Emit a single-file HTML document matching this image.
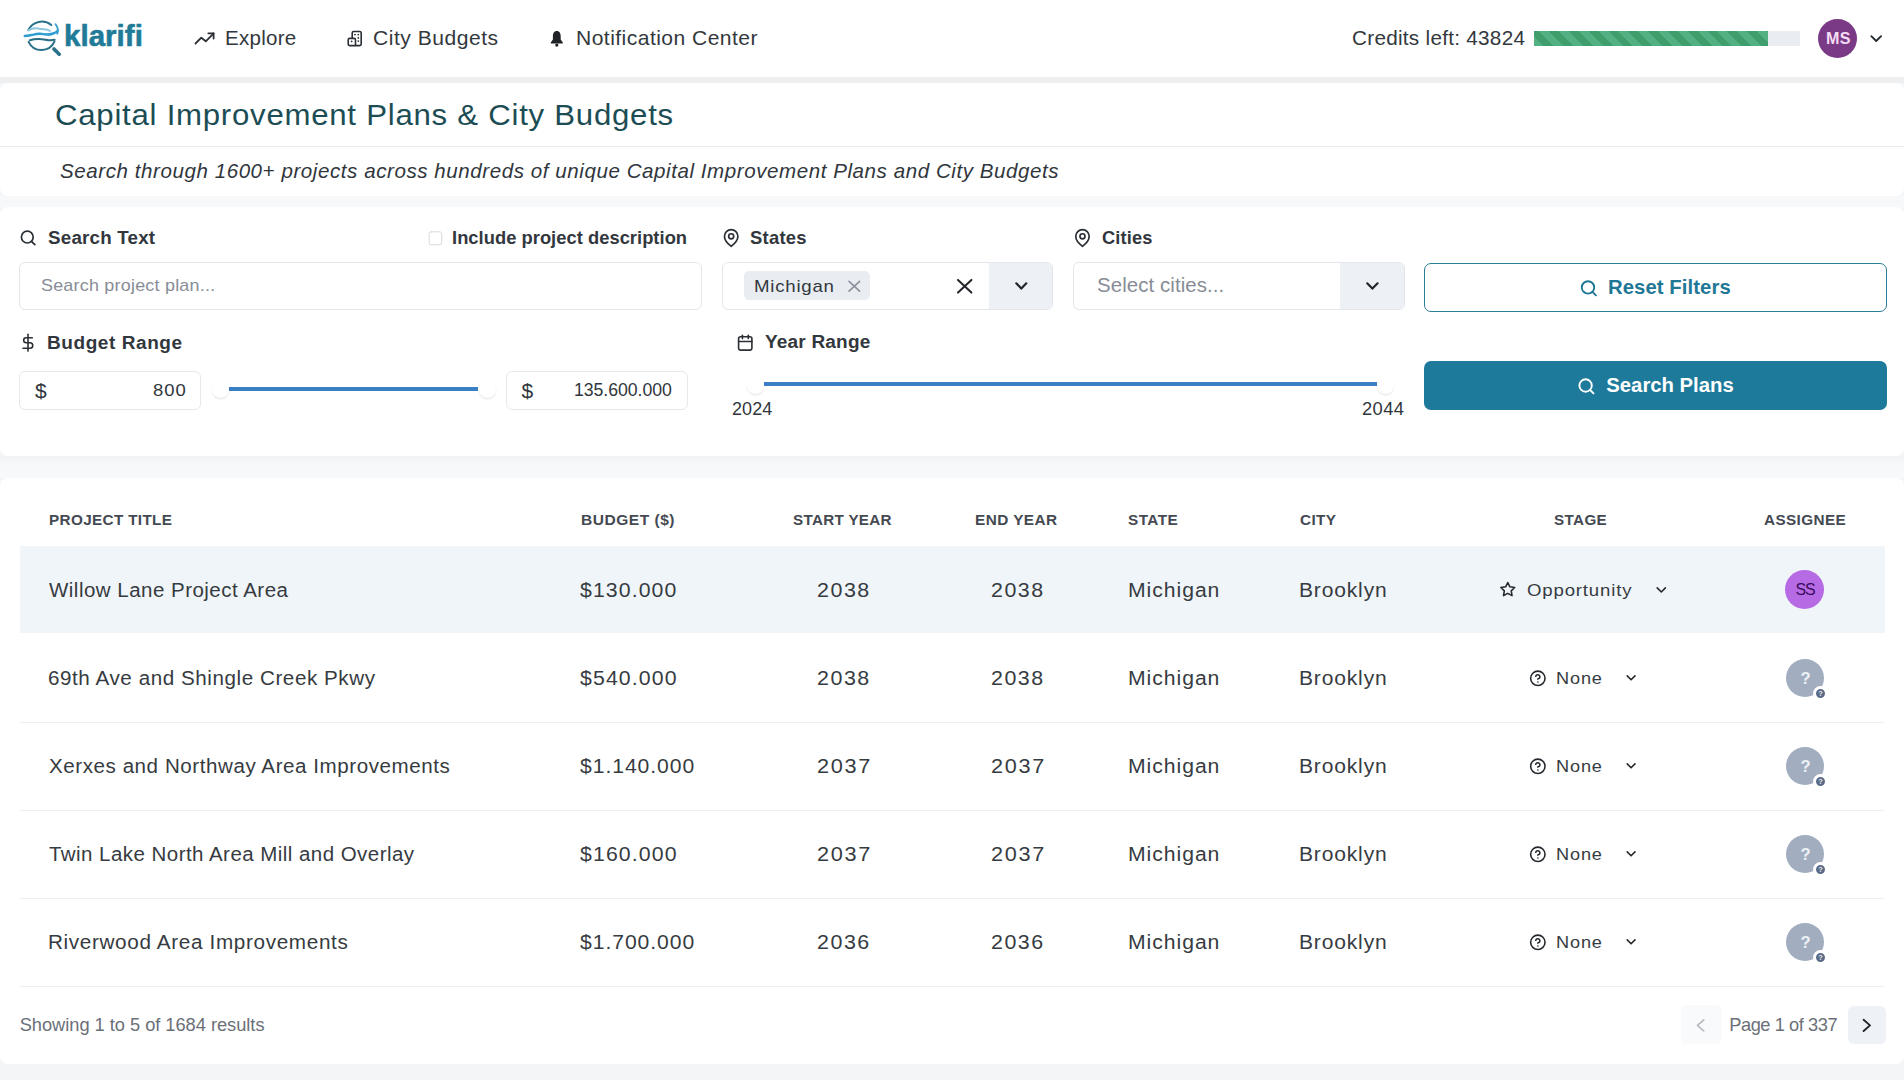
<!DOCTYPE html>
<html><head><meta charset="utf-8">
<style>
html,body{margin:0;padding:0}
body{width:1904px;height:1080px;overflow:hidden;position:relative;background:#f4f5f7;font-family:"Liberation Sans",sans-serif}
.b{position:absolute;box-sizing:border-box}
.t{position:absolute;white-space:nowrap;font-family:"Liberation Sans",sans-serif}
svg.ov{position:absolute;left:0;top:0;width:1904px;height:1080px;overflow:visible}
</style></head><body>
<!-- backgrounds -->
<div class="b" style="left:0;top:0;width:1904px;height:77px;background:#ffffff"></div>
<div class="b" style="left:0;top:77px;width:1904px;height:6px;background:#edeff1"></div>
<div class="b" style="left:0;top:83px;width:1904px;height:113px;background:#ffffff;border-radius:8px"></div>
<div class="b" style="left:0;top:146px;width:1904px;height:1px;background:#e8eaed"></div>
<div class="b" style="left:0;top:196px;width:1904px;height:12px;background:#f7f8fa"></div>
<div class="b" style="left:0;top:207px;width:1904px;height:249px;background:#ffffff;border-radius:8px"></div>
<div class="b" style="left:0;top:456px;width:1904px;height:22px;background:linear-gradient(#f1f3f4,#f7f8fa 40%,#f8f9fb)"></div>
<div class="b" style="left:0;top:478px;width:1904px;height:586px;background:#ffffff;border-radius:8px"></div>

<!-- header progress + avatar -->
<div class="b" style="left:1534px;top:31px;width:266px;height:15px;background:#e9edf1"></div>
<div class="b" style="left:1534px;top:31px;width:234px;height:15px;background:repeating-linear-gradient(45deg,#52b083 0px,#52b083 7px,#3f9e6c 7px,#3f9e6c 14px)"></div>
<div class="b" style="left:1818px;top:19px;width:39px;height:39px;border-radius:50%;background:#7a3a86"></div>

<!-- inputs -->
<div class="b" style="left:19px;top:262px;width:683px;height:48px;border:1px solid #e3e6ea;border-radius:6px;background:#fff"></div>
<div class="b" style="left:722px;top:262px;width:331px;height:48px;border:1px solid #e3e6ea;border-radius:6px;background:#fff;overflow:hidden">
  <div class="b" style="left:266px;top:0;width:64px;height:46px;background:#edf0f4"></div>
</div>
<div class="b" style="left:744px;top:271px;width:126px;height:29px;border-radius:5px;background:#e9edf2"></div>
<div class="b" style="left:1073px;top:262px;width:332px;height:48px;border:1px solid #e3e6ea;border-radius:6px;background:#fff;overflow:hidden">
  <div class="b" style="left:266px;top:0;width:65px;height:46px;background:#edf0f4"></div>
</div>
<div class="b" style="left:1424px;top:263px;width:463px;height:49px;border:1.5px solid #2a7d98;border-radius:7px;background:#fff"></div>
<div class="b" style="left:1424px;top:361px;width:463px;height:49px;border-radius:7px;background:#1e7a9a"></div>
<div class="b" style="left:19px;top:371px;width:182px;height:39px;border:1px solid #e6e8eb;border-radius:6px;background:#fff"></div>
<div class="b" style="left:506px;top:371px;width:182px;height:39px;border:1px solid #e6e8eb;border-radius:6px;background:#fff"></div>

<!-- sliders -->
<div class="b" style="left:228.8px;top:386.8px;width:249.2px;height:3.8px;background:#3a7fc4"></div>
<div class="b" style="left:212px;top:381px;width:17px;height:17px;border-radius:50%;background:#fff;box-shadow:0 1.5px 2px rgba(0,0,0,.09)"></div>
<div class="b" style="left:479px;top:381px;width:17px;height:17px;border-radius:50%;background:#fff;box-shadow:0 1.5px 2px rgba(0,0,0,.09)"></div>
<div class="b" style="left:764px;top:381.8px;width:613px;height:4.3px;background:#3a7fc4"></div>
<div class="b" style="left:747px;top:377px;width:17px;height:17px;border-radius:50%;background:#fff;box-shadow:0 1.5px 2px rgba(0,0,0,.09)"></div>
<div class="b" style="left:1377px;top:377px;width:17px;height:17px;border-radius:50%;background:#fff;box-shadow:0 1.5px 2px rgba(0,0,0,.09)"></div>

<!-- table -->
<div class="b" style="left:20px;top:545.6px;width:1865px;height:87px;background:#f0f5f9"></div>
<div class="b" style="left:20px;top:722px;width:1864px;height:1px;background:#eceef1"></div>
<div class="b" style="left:20px;top:810px;width:1864px;height:1px;background:#eceef1"></div>
<div class="b" style="left:20px;top:898px;width:1864px;height:1px;background:#eceef1"></div>
<div class="b" style="left:20px;top:986px;width:1864px;height:1px;background:#eceef1"></div>
<div class="b" style="left:1785px;top:570px;width:39px;height:39px;border-radius:50%;background:#b66be5"></div>
<div class="b" style="left:1785.8px;top:658.5px;width:38.2px;height:38.2px;border-radius:50%;background:#a2adbf"></div>
<div class="b" style="left:1812.7px;top:685.5px;width:15px;height:15px;border-radius:50%;background:#5b6b86;border:3px solid #fff"></div>
<div class="t" style="left:1818.2px;top:689.9px;font-size:7.5px;line-height:8px;font-weight:700;color:#e3e8f0">?</div>
<div class="b" style="left:1785.8px;top:746.5px;width:38.2px;height:38.2px;border-radius:50%;background:#a2adbf"></div>
<div class="b" style="left:1812.7px;top:773.5px;width:15px;height:15px;border-radius:50%;background:#5b6b86;border:3px solid #fff"></div>
<div class="t" style="left:1818.2px;top:777.9px;font-size:7.5px;line-height:8px;font-weight:700;color:#e3e8f0">?</div>
<div class="b" style="left:1785.8px;top:834.5px;width:38.2px;height:38.2px;border-radius:50%;background:#a2adbf"></div>
<div class="b" style="left:1812.7px;top:861.5px;width:15px;height:15px;border-radius:50%;background:#5b6b86;border:3px solid #fff"></div>
<div class="t" style="left:1818.2px;top:865.9px;font-size:7.5px;line-height:8px;font-weight:700;color:#e3e8f0">?</div>
<div class="b" style="left:1785.8px;top:922.5px;width:38.2px;height:38.2px;border-radius:50%;background:#a2adbf"></div>
<div class="b" style="left:1812.7px;top:949.5px;width:15px;height:15px;border-radius:50%;background:#5b6b86;border:3px solid #fff"></div>
<div class="t" style="left:1818.2px;top:953.9px;font-size:7.5px;line-height:8px;font-weight:700;color:#e3e8f0">?</div>


<!-- pagination -->
<div class="b" style="left:1681px;top:1005px;width:41px;height:39px;border-radius:6px;background:#f9fafb"></div>
<div class="b" style="left:1848px;top:1006px;width:38px;height:38px;border-radius:6px;background:#eef1f5"></div>

<svg class="ov" width="1904" height="1080" viewBox="0 0 1904 1080" fill="none" stroke-linecap="round" stroke-linejoin="round">
<!-- logo -->
<g stroke-linecap="round" fill="none">
 <path d="M28.4 30 A15 15 0 0 1 51.3 25" stroke="#2b7089" stroke-width="2"/>
 <path d="M55.6 24.2 Q59.2 29 57.2 33.6" stroke="#3a9fcc" stroke-width="1.9"/>
 <path d="M28.4 30.4 Q33 27.6 37 28.4 Q41 29.2 44.4 29.3 Q47.5 29.4 50 31" stroke="#8cc6df" stroke-width="1.9"/>
 <path d="M24.8 36.1 Q29 35.6 33.4 34.6 Q37 33.6 40 33.7 Q43.5 34 46.6 34.6 Q50.5 34.6 53.2 33.5 Q56 32.5 57.4 31" stroke="#2e9dd1" stroke-width="2.5"/>
 <path d="M29.9 40.2 Q34.5 38.8 39.3 39 Q44 39.4 48.1 40.1 Q51.5 40.4 54.6 39.8" stroke="#2b6e86" stroke-width="2.1"/>
 <path d="M28.6 41.8 A14.2 14.2 0 0 0 54.5 41.4" stroke="#2b7089" stroke-width="2"/>
 <path d="M54 49 L59.2 54.2" stroke="#2b7089" stroke-width="3.6"/>
</g>
<!-- trending up -->
<g stroke="#2a2f35" stroke-width="1.8">
 <polyline points="195.5,43.5 201.3,37.7 205.8,41.3 213.6,33.3"/>
 <polyline points="208.3,33.3 213.6,33.3 213.6,38.6"/>
</g>
<!-- building -->
<g stroke="#2a2f35" stroke-width="1.6">
 <path d="M352.2 38.4 V33 a1.5 1.5 0 0 1 1.5 -1.5 h6 a1.5 1.5 0 0 1 1.5 1.5 V44.1 a1.5 1.5 0 0 1 -1.5 1.5 H349.7 a1.5 1.5 0 0 1 -1.5 -1.5 V39.9 a1.5 1.5 0 0 1 1.5 -1.5 h4.3 a1.5 1.5 0 0 1 1.5 1.5 V45.6"/>
</g>
<g fill="#2a2f35">
 <circle cx="355" cy="34.6" r="0.9"/><circle cx="358.3" cy="34.6" r="0.9"/><circle cx="358.3" cy="37.9" r="0.9"/><circle cx="358.3" cy="41.1" r="0.9"/><circle cx="351.6" cy="41.4" r="0.9"/>
</g>
<!-- bell -->
<path fill="#202327" d="M556.8 31 C559.6 31 560.7 33.6 560.7 36.2 L560.7 39.6 L562.8 42.4 L562.8 43.5 L550.8 43.5 L550.8 42.4 L552.9 39.6 L552.9 36.2 C552.9 33.6 554 31 556.8 31 Z"/>
<circle fill="#202327" cx="556.8" cy="45.1" r="1.6"/>
<!-- header chevron -->
<polyline points="1871.3,36.2 1876.2,41 1881.1,36.2" stroke="#25292e" stroke-width="1.8"/>
<!-- search label icon -->
<g stroke="#2a2f35" stroke-width="1.7"><circle cx="27.3" cy="237.1" r="5.9"/><line x1="31.5" y1="241.3" x2="34.8" y2="244.6"/></g>
<!-- checkbox -->
<rect x="429.2" y="231.8" width="12.5" height="13" rx="2" stroke="#d7dade" stroke-width="1"/>
<!-- map pins -->
<g transform="translate(721.1,227.9) scale(0.84)" stroke="#2a2f35" stroke-width="2"><path d="M20 10c0 6-8 12-8 12s-8-6-8-12a8 8 0 0 1 16 0Z"/><circle cx="12" cy="10" r="3"/></g>
<g transform="translate(1072.4,227.9) scale(0.84)" stroke="#2a2f35" stroke-width="2"><path d="M20 10c0 6-8 12-8 12s-8-6-8-12a8 8 0 0 1 16 0Z"/><circle cx="12" cy="10" r="3"/></g>
<!-- chip x -->
<g stroke="#8b919a" stroke-width="1.6"><line x1="849" y1="281.3" x2="859.6" y2="291.2"/><line x1="859.6" y1="281.3" x2="849" y2="291.2"/></g>
<!-- big x -->
<g stroke="#22262b" stroke-width="2"><line x1="958" y1="279.9" x2="971.4" y2="292.6"/><line x1="971.4" y1="279.9" x2="958" y2="292.6"/></g>
<!-- dropdown chevrons -->
<polyline points="1016.3,283.3 1021.3,288.6 1026.3,283.3" stroke="#22262b" stroke-width="2.2"/>
<polyline points="1367.2,283.3 1372.4,288.6 1377.6,283.3" stroke="#22262b" stroke-width="2.2"/>
<!-- reset search icon -->
<g stroke="#1f7896" stroke-width="1.9"><circle cx="1588" cy="287.4" r="6.2"/><line x1="1592.4" y1="291.8" x2="1595.9" y2="295.3"/></g>
<!-- search plans icon -->
<g stroke="#ffffff" stroke-width="1.9"><circle cx="1585.6" cy="385.5" r="6.2"/><line x1="1590" y1="389.9" x2="1593.5" y2="393.4"/></g>
<!-- dollar label icon -->
<g stroke="#2a2f35" stroke-width="1.6"><line x1="28" y1="334.4" x2="28" y2="351.1"/><path d="M32.3 337.7 H26.2 a2.5 2.5 0 0 0 0 5 H30 a2.75 2.75 0 0 1 0 5.5 H23"/></g>
<!-- calendar -->
<g stroke="#2a2f35" stroke-width="1.6"><rect x="738.6" y="336.8" width="13.3" height="13.3" rx="2"/><line x1="742.4" y1="335.2" x2="742.4" y2="338.6"/><line x1="748.3" y1="335.2" x2="748.3" y2="338.6"/><line x1="738.6" y1="341.5" x2="751.9" y2="341.5"/></g>
<!-- star row1 -->
<g transform="translate(1499.5,581.1) scale(0.69)" stroke="#25292e" stroke-width="2.3"><polygon points="12 2 15.09 8.26 22 9.27 17 14.14 18.18 21.02 12 17.77 5.82 21.02 7 14.14 2 9.27 8.91 8.26 12 2"/></g>
<polyline points="1657.2,587.9 1661.3,592 1665.4,587.9" stroke="#25292e" stroke-width="1.6"/>
<g transform="translate(1529.2,669.7) scale(0.72)" stroke="#25292e" stroke-width="2.2"><circle cx="12" cy="12" r="10"/><path d="M9.09 9a3 3 0 0 1 5.83 1c0 2-3 3-3 3"/><line x1="12" y1="17" x2="12.01" y2="17"/></g>
<polyline points="1627.2,675.9 1631.1,679.8 1635,675.9" stroke="#25292e" stroke-width="1.6"/>
<g transform="translate(1529.2,757.7) scale(0.72)" stroke="#25292e" stroke-width="2.2"><circle cx="12" cy="12" r="10"/><path d="M9.09 9a3 3 0 0 1 5.83 1c0 2-3 3-3 3"/><line x1="12" y1="17" x2="12.01" y2="17"/></g>
<polyline points="1627.2,763.9 1631.1,767.8 1635,763.9" stroke="#25292e" stroke-width="1.6"/>
<g transform="translate(1529.2,845.7) scale(0.72)" stroke="#25292e" stroke-width="2.2"><circle cx="12" cy="12" r="10"/><path d="M9.09 9a3 3 0 0 1 5.83 1c0 2-3 3-3 3"/><line x1="12" y1="17" x2="12.01" y2="17"/></g>
<polyline points="1627.2,851.9 1631.1,855.8 1635,851.9" stroke="#25292e" stroke-width="1.6"/>
<g transform="translate(1529.2,933.7) scale(0.72)" stroke="#25292e" stroke-width="2.2"><circle cx="12" cy="12" r="10"/><path d="M9.09 9a3 3 0 0 1 5.83 1c0 2-3 3-3 3"/><line x1="12" y1="17" x2="12.01" y2="17"/></g>
<polyline points="1627.2,939.9 1631.1,943.8 1635,939.9" stroke="#25292e" stroke-width="1.6"/>

<!-- pagination chevrons -->
<polyline points="1703.8,1019.8 1697.4,1025.4 1703.8,1031" stroke="#b3b8bf" stroke-width="1.6"/>
<polyline points="1863.6,1019.8 1870,1025.4 1863.6,1031" stroke="#22262b" stroke-width="1.9"/>
</svg>


<div class="t" style="left:224.88px;top:27.95px;font-size:20.14px;line-height:20.14px;letter-spacing:0.244px;font-weight:400;font-style:normal;color:#33383d;transform:scaleX(1.0218);transform-origin:0 0;">Explore</div>
<div class="t" style="left:373.35px;top:27.95px;font-size:20.14px;line-height:20.14px;letter-spacing:0.483px;font-weight:400;font-style:normal;color:#33383d;transform:scaleX(1.0470);transform-origin:0 0;">City Budgets</div>
<div class="t" style="left:576.45px;top:27.95px;font-size:20.14px;line-height:20.14px;letter-spacing:0.433px;font-weight:400;font-style:normal;color:#33383d;transform:scaleX(1.0473);transform-origin:0 0;">Notification Center</div>
<div class="t" style="left:1351.57px;top:27.95px;font-size:20.14px;line-height:20.14px;letter-spacing:0.262px;font-weight:400;font-style:normal;color:#33383d;transform:scaleX(1.0291);transform-origin:0 0;">Credits left: 43824</div>
<div class="t" style="left:54.75px;top:99.65px;font-size:29.71px;line-height:29.71px;letter-spacing:0.710px;font-weight:400;font-style:normal;color:#1c4d55;transform:scaleX(1.0495);transform-origin:0 0;">Capital Improvement Plans &amp; City Budgets</div>
<div class="t" style="left:60.00px;top:162.06px;font-size:19.42px;line-height:19.42px;letter-spacing:0.536px;font-weight:400;font-style:italic;color:#30363c;transform:scaleX(1.0583);transform-origin:0 0;">Search through 1600+ projects across hundreds of unique Capital Improvement Plans and City Budgets</div>
<div class="t" style="left:47.50px;top:229.32px;font-size:18.41px;line-height:18.41px;letter-spacing:0.204px;font-weight:700;font-style:normal;color:#32373d;transform:scaleX(1.0199);transform-origin:0 0;">Search Text</div>
<div class="t" style="left:452.10px;top:229.04px;font-size:18.26px;line-height:18.26px;letter-spacing:0.035px;font-weight:700;font-style:normal;color:#32373d;transform:scaleX(1.0039);transform-origin:0 0;">Include project description</div>
<div class="t" style="left:750.30px;top:229.69px;font-size:17.97px;line-height:17.97px;letter-spacing:0.263px;font-weight:700;font-style:normal;color:#32373d;transform:scaleX(1.0244);transform-origin:0 0;">States</div>
<div class="t" style="left:1101.80px;top:229.69px;font-size:17.97px;line-height:17.97px;letter-spacing:0.155px;font-weight:700;font-style:normal;color:#32373d;transform:scaleX(1.0158);transform-origin:0 0;">Cities</div>
<div class="t" style="left:40.60px;top:277.28px;font-size:17.39px;line-height:17.39px;letter-spacing:0.233px;font-weight:400;font-style:normal;color:#878c96;transform:scaleX(1.0300);transform-origin:0 0;">Search project plan...</div>
<div class="t" style="left:754.33px;top:277.58px;font-size:17.39px;line-height:17.39px;letter-spacing:0.712px;font-weight:400;font-style:normal;color:#32373d;transform:scaleX(1.0734);transform-origin:0 0;">Michigan</div>
<div class="t" style="left:1096.60px;top:274.92px;font-size:20.29px;line-height:20.29px;letter-spacing:0.070px;font-weight:400;font-style:normal;color:#878c96;transform:scaleX(1.0086);transform-origin:0 0;">Select cities...</div>
<div class="t" style="left:1608.39px;top:277.25px;font-size:20.14px;line-height:20.14px;letter-spacing:0.079px;font-weight:700;font-style:normal;color:#1f7896;transform:scaleX(1.0079);transform-origin:0 0;">Reset Filters</div>
<div class="t" style="left:47.25px;top:334.06px;font-size:18.12px;line-height:18.12px;letter-spacing:0.547px;font-weight:700;font-style:normal;color:#32373d;transform:scaleX(1.0494);transform-origin:0 0;">Budget Range</div>
<div class="t" style="left:764.90px;top:333.37px;font-size:18.70px;line-height:18.70px;letter-spacing:0.193px;font-weight:700;font-style:normal;color:#32373d;transform:scaleX(1.0171);transform-origin:0 0;">Year Range</div>
<div class="t" style="left:152.90px;top:382.38px;font-size:17.39px;line-height:17.39px;letter-spacing:0.890px;font-weight:400;font-style:normal;color:#30363c;transform:scaleX(1.0629);transform-origin:0 0;">800</div>
<div class="t" style="left:574.00px;top:382.13px;font-size:17.68px;line-height:17.68px;letter-spacing:-0.045px;font-weight:400;font-style:normal;color:#30363c;">135.600.000</div>
<div class="t" style="left:732.10px;top:401.21px;font-size:17.83px;line-height:17.83px;letter-spacing:0.113px;font-weight:400;font-style:normal;color:#30363c;transform:scaleX(1.0085);transform-origin:0 0;">2024</div>
<div class="t" style="left:1361.60px;top:400.71px;font-size:17.83px;line-height:17.83px;letter-spacing:0.391px;font-weight:400;font-style:normal;color:#30363c;transform:scaleX(1.0295);transform-origin:0 0;">2044</div>
<div class="t" style="left:1606.30px;top:374.92px;font-size:20.29px;line-height:20.29px;letter-spacing:-0.001px;font-weight:700;font-style:normal;color:#ffffff;">Search Plans</div>
<div class="t" style="left:49.20px;top:512.59px;font-size:14.78px;line-height:14.78px;letter-spacing:0.332px;font-weight:700;font-style:normal;color:#444952;transform:scaleX(1.0346);transform-origin:0 0;">PROJECT TITLE</div>
<div class="t" style="left:581.30px;top:512.59px;font-size:14.78px;line-height:14.78px;letter-spacing:0.489px;font-weight:700;font-style:normal;color:#444952;transform:scaleX(1.0520);transform-origin:0 0;">BUDGET ($)</div>
<div class="t" style="left:792.60px;top:512.59px;font-size:14.78px;line-height:14.78px;letter-spacing:0.308px;font-weight:700;font-style:normal;color:#444952;transform:scaleX(1.0296);transform-origin:0 0;">START YEAR</div>
<div class="t" style="left:974.90px;top:512.59px;font-size:14.78px;line-height:14.78px;letter-spacing:0.432px;font-weight:700;font-style:normal;color:#444952;transform:scaleX(1.0394);transform-origin:0 0;">END YEAR</div>
<div class="t" style="left:1127.90px;top:512.59px;font-size:14.78px;line-height:14.78px;letter-spacing:0.435px;font-weight:700;font-style:normal;color:#444952;transform:scaleX(1.0375);transform-origin:0 0;">STATE</div>
<div class="t" style="left:1299.50px;top:512.59px;font-size:14.78px;line-height:14.78px;letter-spacing:0.379px;font-weight:700;font-style:normal;color:#444952;transform:scaleX(1.0337);transform-origin:0 0;">CITY</div>
<div class="t" style="left:1553.90px;top:512.59px;font-size:14.78px;line-height:14.78px;letter-spacing:0.367px;font-weight:700;font-style:normal;color:#444952;transform:scaleX(1.0294);transform-origin:0 0;">STAGE</div>
<div class="t" style="left:1763.70px;top:512.59px;font-size:14.78px;line-height:14.78px;letter-spacing:0.382px;font-weight:700;font-style:normal;color:#444952;transform:scaleX(1.0350);transform-origin:0 0;">ASSIGNEE</div>
<div class="t" style="left:19.70px;top:1015.84px;font-size:18.26px;line-height:18.26px;letter-spacing:-0.024px;font-weight:400;font-style:normal;color:#6b7078;">Showing 1 to 5 of 1684 results</div>
<div class="t" style="left:1729.20px;top:1015.74px;font-size:18.26px;line-height:18.26px;letter-spacing:-0.442px;font-weight:400;font-style:normal;color:#6b7078;">Page 1 of 337</div>
<div class="t" style="left:49.20px;top:580.64px;font-size:19.57px;line-height:19.57px;letter-spacing:0.457px;font-weight:400;font-style:normal;color:#363b41;transform:scaleX(1.0481);transform-origin:0 0;">Willow Lane Project Area</div>
<div class="t" style="left:580.40px;top:580.64px;font-size:19.57px;line-height:19.57px;letter-spacing:1.009px;font-weight:400;font-style:normal;color:#363b41;transform:scaleX(1.0865);transform-origin:0 0;">$130.000</div>
<div class="t" style="left:816.70px;top:580.64px;font-size:19.57px;line-height:19.57px;letter-spacing:1.397px;font-weight:400;font-style:normal;color:#363b41;transform:scaleX(1.0961);transform-origin:0 0;">2038</div>
<div class="t" style="left:990.50px;top:580.64px;font-size:19.57px;line-height:19.57px;letter-spacing:1.367px;font-weight:400;font-style:normal;color:#363b41;transform:scaleX(1.0940);transform-origin:0 0;">2038</div>
<div class="t" style="left:1127.62px;top:580.64px;font-size:19.57px;line-height:19.57px;letter-spacing:0.888px;font-weight:400;font-style:normal;color:#363b41;transform:scaleX(1.0815);transform-origin:0 0;">Michigan</div>
<div class="t" style="left:1298.83px;top:580.64px;font-size:19.57px;line-height:19.57px;letter-spacing:0.787px;font-weight:400;font-style:normal;color:#363b41;transform:scaleX(1.0742);transform-origin:0 0;">Brooklyn</div>
<div class="t" style="left:1526.90px;top:581.82px;font-size:17.10px;line-height:17.10px;letter-spacing:0.771px;font-weight:400;font-style:normal;color:#363b41;transform:scaleX(1.0868);transform-origin:0 0;">Opportunity</div>
<div class="t" style="left:48.15px;top:668.64px;font-size:19.57px;line-height:19.57px;letter-spacing:0.530px;font-weight:400;font-style:normal;color:#363b41;transform:scaleX(1.0540);transform-origin:0 0;">69th Ave and Shingle Creek Pkwy</div>
<div class="t" style="left:580.40px;top:668.64px;font-size:19.57px;line-height:19.57px;letter-spacing:1.023px;font-weight:400;font-style:normal;color:#363b41;transform:scaleX(1.0877);transform-origin:0 0;">$540.000</div>
<div class="t" style="left:816.70px;top:668.64px;font-size:19.57px;line-height:19.57px;letter-spacing:1.397px;font-weight:400;font-style:normal;color:#363b41;transform:scaleX(1.0961);transform-origin:0 0;">2038</div>
<div class="t" style="left:990.50px;top:668.64px;font-size:19.57px;line-height:19.57px;letter-spacing:1.367px;font-weight:400;font-style:normal;color:#363b41;transform:scaleX(1.0940);transform-origin:0 0;">2038</div>
<div class="t" style="left:1127.62px;top:668.64px;font-size:19.57px;line-height:19.57px;letter-spacing:0.888px;font-weight:400;font-style:normal;color:#363b41;transform:scaleX(1.0815);transform-origin:0 0;">Michigan</div>
<div class="t" style="left:1298.83px;top:668.64px;font-size:19.57px;line-height:19.57px;letter-spacing:0.787px;font-weight:400;font-style:normal;color:#363b41;transform:scaleX(1.0742);transform-origin:0 0;">Brooklyn</div>
<div class="t" style="left:1556.34px;top:669.62px;font-size:17.10px;line-height:17.10px;letter-spacing:0.799px;font-weight:400;font-style:normal;color:#363b41;transform:scaleX(1.0609);transform-origin:0 0;">None</div>
<div class="t" style="left:49.20px;top:756.64px;font-size:19.57px;line-height:19.57px;letter-spacing:0.524px;font-weight:400;font-style:normal;color:#363b41;transform:scaleX(1.0520);transform-origin:0 0;">Xerxes and Northway Area Improvements</div>
<div class="t" style="left:580.40px;top:756.64px;font-size:19.57px;line-height:19.57px;letter-spacing:0.873px;font-weight:400;font-style:normal;color:#363b41;transform:scaleX(1.0802);transform-origin:0 0;">$1.140.000</div>
<div class="t" style="left:816.70px;top:756.64px;font-size:19.57px;line-height:19.57px;letter-spacing:1.547px;font-weight:400;font-style:normal;color:#363b41;transform:scaleX(1.1089);transform-origin:0 0;">2037</div>
<div class="t" style="left:990.50px;top:756.64px;font-size:19.57px;line-height:19.57px;letter-spacing:1.517px;font-weight:400;font-style:normal;color:#363b41;transform:scaleX(1.1068);transform-origin:0 0;">2037</div>
<div class="t" style="left:1127.62px;top:756.64px;font-size:19.57px;line-height:19.57px;letter-spacing:0.888px;font-weight:400;font-style:normal;color:#363b41;transform:scaleX(1.0815);transform-origin:0 0;">Michigan</div>
<div class="t" style="left:1298.83px;top:756.64px;font-size:19.57px;line-height:19.57px;letter-spacing:0.787px;font-weight:400;font-style:normal;color:#363b41;transform:scaleX(1.0742);transform-origin:0 0;">Brooklyn</div>
<div class="t" style="left:1556.34px;top:757.62px;font-size:17.10px;line-height:17.10px;letter-spacing:0.799px;font-weight:400;font-style:normal;color:#363b41;transform:scaleX(1.0609);transform-origin:0 0;">None</div>
<div class="t" style="left:49.20px;top:844.64px;font-size:19.57px;line-height:19.57px;letter-spacing:0.439px;font-weight:400;font-style:normal;color:#363b41;transform:scaleX(1.0474);transform-origin:0 0;">Twin Lake North Area Mill and Overlay</div>
<div class="t" style="left:580.40px;top:844.64px;font-size:19.57px;line-height:19.57px;letter-spacing:1.023px;font-weight:400;font-style:normal;color:#363b41;transform:scaleX(1.0877);transform-origin:0 0;">$160.000</div>
<div class="t" style="left:816.70px;top:844.64px;font-size:19.57px;line-height:19.57px;letter-spacing:1.547px;font-weight:400;font-style:normal;color:#363b41;transform:scaleX(1.1089);transform-origin:0 0;">2037</div>
<div class="t" style="left:990.50px;top:844.64px;font-size:19.57px;line-height:19.57px;letter-spacing:1.517px;font-weight:400;font-style:normal;color:#363b41;transform:scaleX(1.1068);transform-origin:0 0;">2037</div>
<div class="t" style="left:1127.62px;top:844.64px;font-size:19.57px;line-height:19.57px;letter-spacing:0.888px;font-weight:400;font-style:normal;color:#363b41;transform:scaleX(1.0815);transform-origin:0 0;">Michigan</div>
<div class="t" style="left:1298.83px;top:844.64px;font-size:19.57px;line-height:19.57px;letter-spacing:0.787px;font-weight:400;font-style:normal;color:#363b41;transform:scaleX(1.0742);transform-origin:0 0;">Brooklyn</div>
<div class="t" style="left:1556.34px;top:845.62px;font-size:17.10px;line-height:17.10px;letter-spacing:0.799px;font-weight:400;font-style:normal;color:#363b41;transform:scaleX(1.0609);transform-origin:0 0;">None</div>
<div class="t" style="left:48.14px;top:932.64px;font-size:19.57px;line-height:19.57px;letter-spacing:0.604px;font-weight:400;font-style:normal;color:#363b41;transform:scaleX(1.0587);transform-origin:0 0;">Riverwood Area Improvements</div>
<div class="t" style="left:580.40px;top:932.64px;font-size:19.57px;line-height:19.57px;letter-spacing:0.873px;font-weight:400;font-style:normal;color:#363b41;transform:scaleX(1.0802);transform-origin:0 0;">$1.700.000</div>
<div class="t" style="left:816.70px;top:932.64px;font-size:19.57px;line-height:19.57px;letter-spacing:1.397px;font-weight:400;font-style:normal;color:#363b41;transform:scaleX(1.0961);transform-origin:0 0;">2036</div>
<div class="t" style="left:990.50px;top:932.64px;font-size:19.57px;line-height:19.57px;letter-spacing:1.367px;font-weight:400;font-style:normal;color:#363b41;transform:scaleX(1.0940);transform-origin:0 0;">2036</div>
<div class="t" style="left:1127.62px;top:932.64px;font-size:19.57px;line-height:19.57px;letter-spacing:0.888px;font-weight:400;font-style:normal;color:#363b41;transform:scaleX(1.0815);transform-origin:0 0;">Michigan</div>
<div class="t" style="left:1298.83px;top:932.64px;font-size:19.57px;line-height:19.57px;letter-spacing:0.787px;font-weight:400;font-style:normal;color:#363b41;transform:scaleX(1.0742);transform-origin:0 0;">Brooklyn</div>
<div class="t" style="left:1556.34px;top:933.62px;font-size:17.10px;line-height:17.10px;letter-spacing:0.799px;font-weight:400;font-style:normal;color:#363b41;transform:scaleX(1.0609);transform-origin:0 0;">None</div>
<div class="t" style="left:63.59px;top:20.92px;font-size:29.28px;line-height:29.28px;letter-spacing:0.062px;font-weight:700;font-style:normal;color:#1f7b97;transform:scaleX(1.0050);transform-origin:0 0;-webkit-text-stroke:0.6px #1f7b97;">klarifi</div>
<div class="t" style="left:1825.78px;top:30.73px;font-size:15.80px;line-height:15.80px;letter-spacing:0.423px;font-weight:700;font-style:normal;color:#f5dcf5;transform:scaleX(1.0191);transform-origin:0 0;">MS</div>
<div class="t" style="left:1795.50px;top:582.11px;font-size:15.94px;line-height:15.94px;letter-spacing:-1.130px;font-weight:400;font-style:normal;color:#3a0b5c;">SS</div>
<div class="t" style="left:34.90px;top:379.81px;font-size:21.01px;line-height:21.01px;letter-spacing:0.000px;font-weight:400;font-style:normal;color:#30363c;">$</div>
<div class="t" style="left:521.60px;top:379.81px;font-size:21.01px;line-height:21.01px;letter-spacing:0.000px;font-weight:400;font-style:normal;color:#30363c;">$</div>
<div class="t" style="left:1800.60px;top:670.71px;font-size:16.52px;line-height:16.52px;letter-spacing:0.000px;font-weight:700;font-style:normal;color:#eef1f5;">?</div>
<div class="t" style="left:1800.60px;top:758.71px;font-size:16.52px;line-height:16.52px;letter-spacing:0.000px;font-weight:700;font-style:normal;color:#eef1f5;">?</div>
<div class="t" style="left:1800.60px;top:846.71px;font-size:16.52px;line-height:16.52px;letter-spacing:0.000px;font-weight:700;font-style:normal;color:#eef1f5;">?</div>
<div class="t" style="left:1800.60px;top:934.71px;font-size:16.52px;line-height:16.52px;letter-spacing:0.000px;font-weight:700;font-style:normal;color:#eef1f5;">?</div>
</body></html>
